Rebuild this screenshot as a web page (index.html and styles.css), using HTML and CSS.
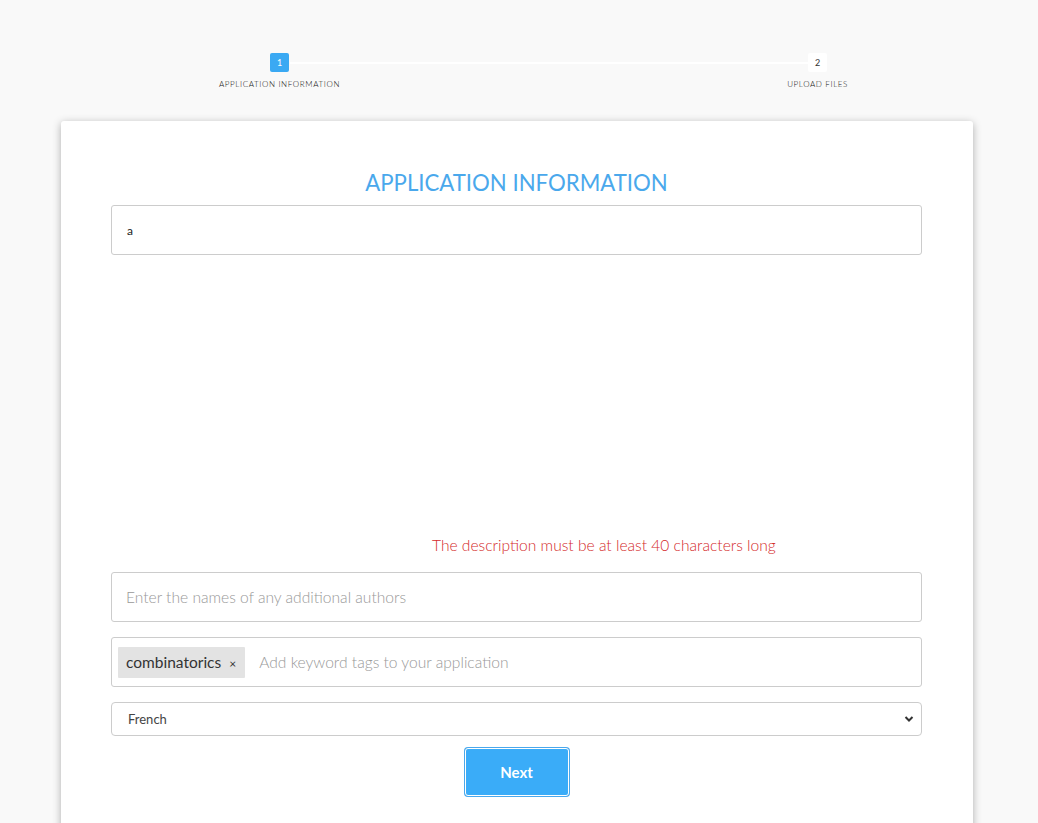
FILE: index.html
```html
<!DOCTYPE html>
<html>
<head>
<meta charset="utf-8">
<link rel="stylesheet" href="styles.css">
</head>
<body>
<div class="stepper">
  <div class="step">
    <div class="step-num active">1</div>
    <div class="step-label">APPLICATION INFORMATION</div>
  </div>
  <div class="step">
    <div class="step-num">2</div>
    <div class="step-label">UPLOAD FILES</div>
  </div>
</div>
<div class="card">
  <h2 class="title">APPLICATION INFORMATION</h2>
  <div class="field name-field">a</div>
  <div class="editor-space"></div>
  <div class="error">The description must be at least 40 characters long</div>
  <div class="field text-field"><span class="placeholder">Enter the names of any additional authors</span></div>
  <div class="field tag-field">
    <span class="tag">combinatorics <span class="tag-x">×</span></span>
    <span class="placeholder">Add keyword tags to your application</span>
  </div>
  <div class="select">
    <span>French</span>
    <svg class="chev" width="10" height="8" viewBox="0 0 10 8"><path d="M1.5 2 L5 5.5 L8.5 2" fill="none" stroke="#333" stroke-width="2"/></svg>
  </div>
  <div class="actions">
    <button class="next">Next</button>
  </div>
</div>
</body>
</html>
```

FILE: styles.css
```css
html, body {
  margin: 0;
  padding: 0;
  background: #f9f9f9;
  font-family: Lato, "Open Sans", sans-serif;
  color: #333;
}

.stepper {
  position: relative;
  display: flex;
  justify-content: space-between;
  margin-left: 219px;
  width: 629px;
  padding-top: 53px;
  height: 68px;
  box-sizing: border-box;
  margin-bottom: 53px;
}

.stepper::before {
  content: "";
  position: absolute;
  left: 71px;
  right: 21px;
  top: 62px;
  height: 2px;
  background: #ffffff;
}

.step {
  position: relative;
  display: flex;
  flex-direction: column;
  align-items: center;
}

.step-num {
  width: 19px;
  height: 19px;
  border-radius: 2px;
  background: #ffffff;
  color: #333;
  font-size: 9px;
  line-height: 19px;
  text-align: center;
}

.step-num.active {
  background: #3aa9f3;
  color: #fff;
}

.step-label {
  margin-top: 7px;
  font-size: 8px;
  font-weight: 300;
  letter-spacing: 0.62px;
  color: #111;
}

.card {
  margin-left: 61px;
  width: 912px;
  background: #fff;
  border-radius: 3px;
  box-shadow: 0 2px 8px rgba(0, 0, 0, 0.3);
  padding: 48px 51px 40px 50px;
  box-sizing: border-box;
}

.title {
  margin: 0 0 9px;
  text-align: center;
  font-weight: 400;
  font-size: 22.2px;
  line-height: 27px;
  color: #4aa8ec;
}

.field {
  border: 1px solid #ccc;
  border-radius: 3px;
  box-sizing: border-box;
  height: 50px;
  display: flex;
  align-items: center;
  padding: 0 14px;
  background: #fff;
}

.name-field {
  font-size: 12px;
  color: #222;
  padding-left: 15px;
}

.editor-space {
  height: 280px;
}

.error {
  margin-left: 321px;
  font-family: "Lato Light", Lato, sans-serif;
  font-size: 15.6px;
  font-weight: 300;
  color: #d42a2a;
  line-height: 20px;
}

.text-field {
  margin-top: 17px;
}

.placeholder {
  font-family: "Lato Light", Lato, sans-serif;
  font-size: 15.6px;
  font-weight: 300;
  color: #999;
}

.tag-field {
  margin-top: 15px;
  padding-left: 6px;
}

.tag {
  background: #e3e3e3;
  color: #333;
  font-size: 15.5px;
  font-weight: 400;
  height: 31px;
  line-height: 31px;
  padding: 0 9px 0 8px;
  margin-right: 14px;
  border-radius: 1px;
}

.tag-x {
  font-size: 12px;
  margin-left: 4px;
}

.select {
  margin-top: 15px;
  height: 34px;
  border: 1px solid #ccc;
  border-radius: 4px;
  display: flex;
  align-items: center;
  justify-content: space-between;
  padding: 0 7px 0 16px;
  font-size: 13px;
  color: #444;
  box-sizing: border-box;
}

.actions {
  display: flex;
  justify-content: center;
  margin-top: 12px;
}

.next {
  width: 104px;
  height: 48px;
  background: #3aacf8;
  color: #fff;
  font-family: Lato, sans-serif;
  font-weight: 700;
  font-size: 15px;
  border: 1px solid #fff;
  border-radius: 3px;
  box-shadow: 0 0 0 1px #4aa8ec;
  cursor: pointer;
}
```
